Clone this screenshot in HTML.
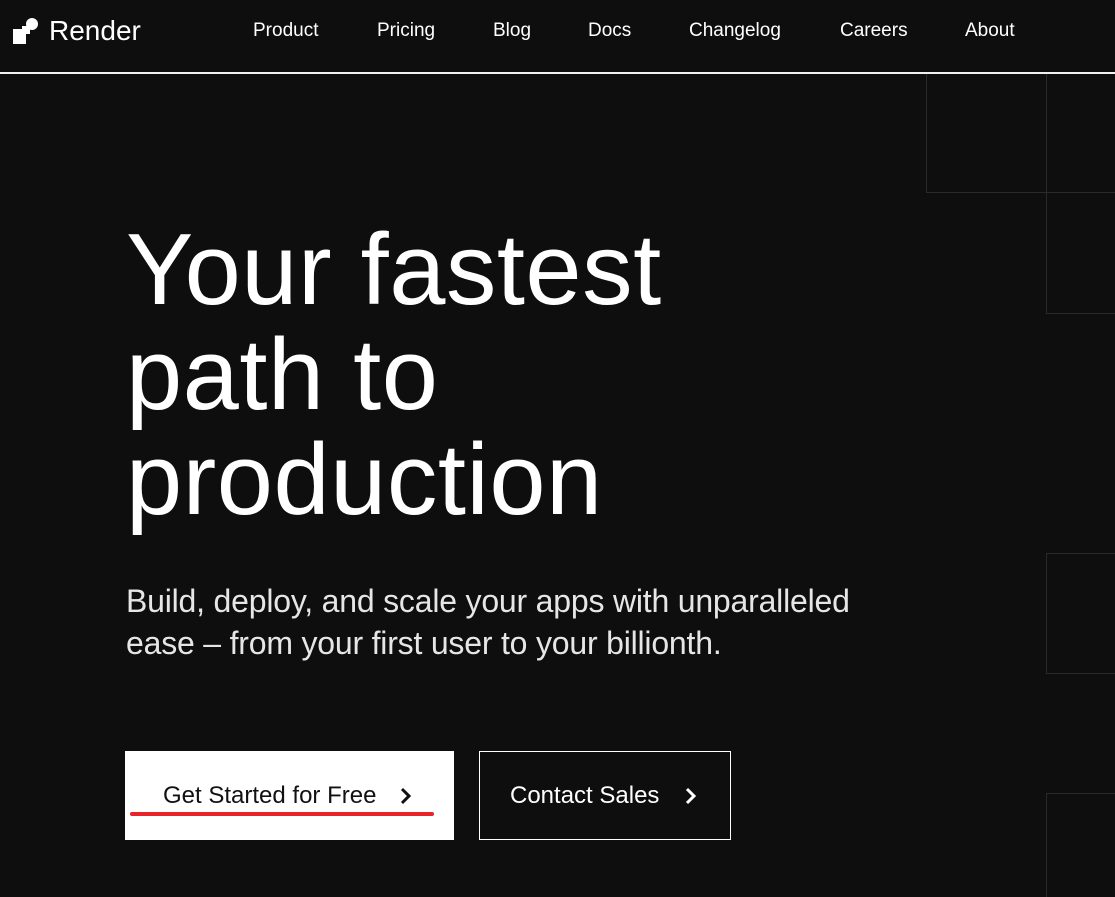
<!DOCTYPE html>
<html><head><meta charset="utf-8"><style>
html,body{margin:0;padding:0;background:#0e0e0e;width:1115px;height:897px;overflow:hidden;font-family:"Liberation Sans",sans-serif;color:#fff;position:relative}
.a{position:absolute}
.nav{top:20px;font-size:19px;letter-spacing:0}
.g{position:absolute;background:#2a2a2a}
h1{position:absolute;left:126px;top:218px;margin:0;font-weight:400;font-size:101px;line-height:105px;letter-spacing:0.5px}
.sub{left:126px;top:580px;font-size:32px;line-height:42px;letter-spacing:-0.2px;color:#e6e6e6}
.btn{position:absolute;top:751px;height:89px;box-sizing:border-box;font-size:24px;letter-spacing:0}
</style></head><body>
<svg class="a" style="left:13px;top:17px" width="26" height="28" viewBox="0 0 26 28"><circle cx="19" cy="7" r="6" fill="#fff"/><path d="M0 12h10a3 3 0 0 0 3-3v2 L13 27H0Z" fill="#fff"/><rect x="9" y="9" width="8" height="8" fill="#fff"/></svg>
<div class="a" style="left:49px;top:15px;font-size:28px;letter-spacing:0">Render</div>
<div class="a nav" style="left:253px">Product</div>
<div class="a nav" style="left:377px">Pricing</div>
<div class="a nav" style="left:493px">Blog</div>
<div class="a nav" style="left:588px">Docs</div>
<div class="a nav" style="left:689px">Changelog</div>
<div class="a nav" style="left:840px">Careers</div>
<div class="a nav" style="left:965px">About</div>
<div class="a" style="left:0;top:72px;width:1115px;height:2px;background:#f0f0f0"></div>
<div class="g" style="left:926px;top:74px;width:1px;height:119px"></div>
<div class="g" style="left:1046px;top:74px;width:1px;height:240px"></div>
<div class="g" style="left:926px;top:192px;width:189px;height:1px"></div>
<div class="g" style="left:1046px;top:313px;width:69px;height:1px"></div>
<div class="g" style="left:1046px;top:553px;width:1px;height:121px"></div>
<div class="g" style="left:1046px;top:553px;width:69px;height:1px"></div>
<div class="g" style="left:1046px;top:673px;width:69px;height:1px"></div>
<div class="g" style="left:1046px;top:793px;width:1px;height:104px"></div>
<div class="g" style="left:1046px;top:793px;width:69px;height:1px"></div>
<h1>Your fastest<br>path to<br>production</h1>
<div class="a sub">Build, deploy, and scale your apps with unparalleled<br>ease – from your first user to your billionth.</div>
<div class="btn" style="left:125px;width:329px;background:#fff;color:#111">
<span class="a" style="left:38px;top:31px">Get Started for Free</span>
<svg class="a" style="left:274px;top:36px" width="14" height="18" viewBox="0 0 14 18"><path d="M3 2l7 7-7 7" fill="none" stroke="#111" stroke-width="3"/></svg>
<div class="a" style="left:5px;top:61px;width:304px;height:4px;border-radius:2px;background:#e8232a"></div>
</div>
<div class="btn" style="left:479px;width:252px;border:1px solid #fff">
<span class="a" style="left:30px;top:30px">Contact Sales</span>
<svg class="a" style="left:204px;top:35px" width="14" height="18" viewBox="0 0 14 18"><path d="M3 2l7 7-7 7" fill="none" stroke="#fff" stroke-width="3"/></svg>
</div>
</body></html>
